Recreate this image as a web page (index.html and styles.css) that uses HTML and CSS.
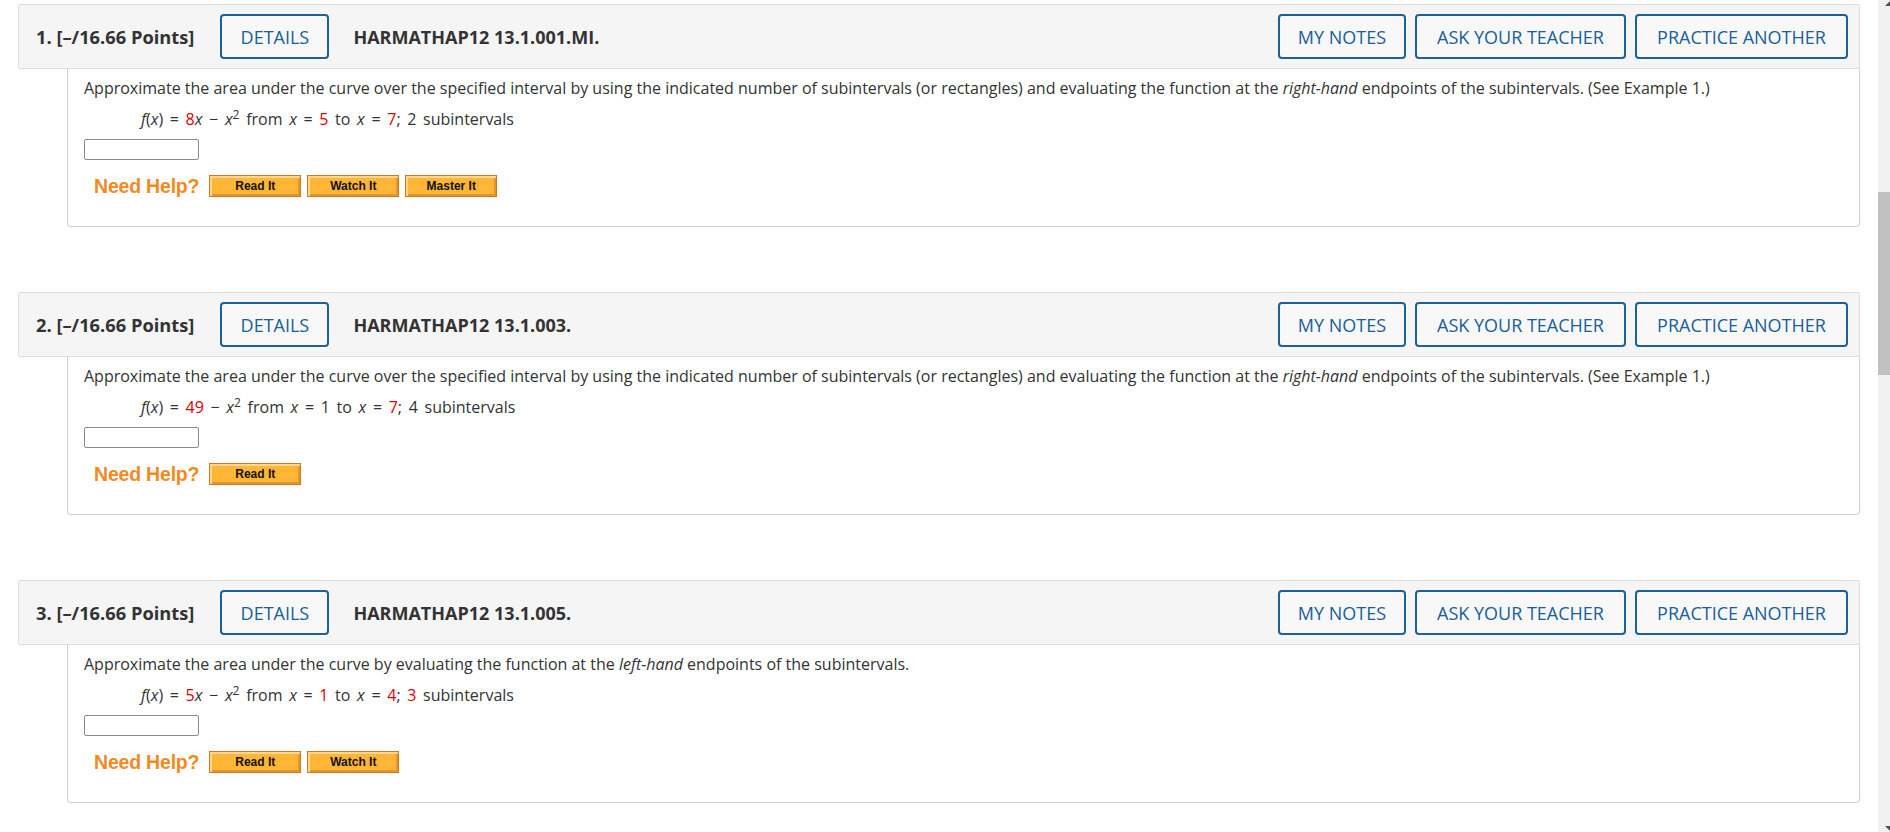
FILE: index.html
```html
<!DOCTYPE html>
<html>
<head>
<meta charset="utf-8">
<title>Questions</title>
<link rel="stylesheet" href="styles.css">
</head>
<body>
<div class="page">
  <main class="main">
    <section class="question">
      <div class="q-head">
        <span class="q-points">1. [–/16.66 Points]</span>
        <button class="q-btn q-details">DETAILS</button>
        <span class="q-code">HARMATHAP12 13.1.001.MI.</span>
        <div class="q-actions">
          <button class="q-btn">MY NOTES</button>
          <button class="q-btn">ASK YOUR TEACHER</button>
          <button class="q-btn">PRACTICE ANOTHER</button>
        </div>
      </div>
      <div class="q-body">
        <p class="q-text">Approximate the area under the curve over the specified interval by using the indicated number of subintervals (or rectangles) and evaluating the function at the <i>right-hand</i> endpoints of the subintervals. (See Example 1.)</p>
        <p class="q-formula"><i>f</i>(<i>x</i>) = <span class="red">8</span><i>x</i> − <i>x</i><sup>2</sup> from <i>x</i> = <span class="red">5</span> to <i>x</i> = <span class="red">7</span>; 2 subintervals</p>
        <input class="q-input" type="text">
        <div class="q-help">
          <span class="need-help">Need Help?</span>
          <button class="help-btn">Read It</button>
          <button class="help-btn">Watch It</button>
          <button class="help-btn">Master It</button>
        </div>
      </div>
    </section>

    <section class="question">
      <div class="q-head">
        <span class="q-points">2. [–/16.66 Points]</span>
        <button class="q-btn q-details">DETAILS</button>
        <span class="q-code">HARMATHAP12 13.1.003.</span>
        <div class="q-actions">
          <button class="q-btn">MY NOTES</button>
          <button class="q-btn">ASK YOUR TEACHER</button>
          <button class="q-btn">PRACTICE ANOTHER</button>
        </div>
      </div>
      <div class="q-body">
        <p class="q-text">Approximate the area under the curve over the specified interval by using the indicated number of subintervals (or rectangles) and evaluating the function at the <i>right-hand</i> endpoints of the subintervals. (See Example 1.)</p>
        <p class="q-formula"><i>f</i>(<i>x</i>) = <span class="red">49</span> − <i>x</i><sup>2</sup> from <i>x</i> = 1 to <i>x</i> = <span class="red">7</span>; 4 subintervals</p>
        <input class="q-input" type="text">
        <div class="q-help">
          <span class="need-help">Need Help?</span>
          <button class="help-btn">Read It</button>
        </div>
      </div>
    </section>

    <section class="question">
      <div class="q-head">
        <span class="q-points">3. [–/16.66 Points]</span>
        <button class="q-btn q-details">DETAILS</button>
        <span class="q-code">HARMATHAP12 13.1.005.</span>
        <div class="q-actions">
          <button class="q-btn">MY NOTES</button>
          <button class="q-btn">ASK YOUR TEACHER</button>
          <button class="q-btn">PRACTICE ANOTHER</button>
        </div>
      </div>
      <div class="q-body">
        <p class="q-text">Approximate the area under the curve by evaluating the function at the <i>left-hand</i> endpoints of the subintervals.</p>
        <p class="q-formula"><i>f</i>(<i>x</i>) = <span class="red">5</span><i>x</i> − <i>x</i><sup>2</sup> from <i>x</i> = <span class="red">1</span> to <i>x</i> = <span class="red">4</span>; <span class="red">3</span> subintervals</p>
        <input class="q-input" type="text">
        <div class="q-help">
          <span class="need-help">Need Help?</span>
          <button class="help-btn">Read It</button>
          <button class="help-btn">Watch It</button>
        </div>
      </div>
    </section>
  </main>
  <div class="scrollbar">
    <div class="sb-arrow sb-up"></div>
    <div class="sb-thumb"></div>
    <div class="sb-arrow sb-down"></div>
  </div>
</div>
</body>
</html>
```

FILE: styles.css
```css
* { box-sizing: border-box; }

html, body {
  margin: 0;
  padding: 0;
  height: 100%;
  overflow: hidden;
  background: #fff;
}

body {
  font-family: "Open Sans", "Liberation Sans", sans-serif;
  color: #333;
}

.page {
  display: flex;
  height: 832px;
}

.main {
  flex: 1;
  padding: 4px 18px 0 18px;
}

.question {
  margin-bottom: 65px;
}

.q-head {
  display: flex;
  align-items: center;
  height: 65px;
  background: #f5f5f5;
  border: 1px solid #dcdcdc;
  border-radius: 2px;
  padding: 0 11px 0 17px;
}

.q-points {
  font-weight: 700;
  font-size: 18.3px;
  color: #333;
  margin-right: 26px;
}

.q-code {
  font-weight: 700;
  font-size: 18px;
  color: #333;
  margin-left: 24px;
}

.q-btn {
  font-family: "Open Sans", "Liberation Sans", sans-serif;
  font-size: 18px;
  font-weight: 400;
  color: #17609a;
  background: #f8f8f8;
  border: 2px solid #1a6296;
  border-radius: 4px;
  height: 45px;
  padding: 0 12px;
  cursor: pointer;
  white-space: nowrap;
}

.q-details {
  width: 109px;
}

.q-actions {
  margin-left: auto;
  display: flex;
  gap: 9px;
}

.q-actions .q-btn:nth-child(1) { width: 128px; }
.q-actions .q-btn:nth-child(2) { width: 211px; }
.q-actions .q-btn:nth-child(3) { width: 213px; }

.q-body {
  margin-left: 49px;
  border: 1px solid #cfcfcf;
  border-top: none;
  border-radius: 0 0 4px 4px;
  padding: 8px 16px 0 16px;
  height: 158px;
}

.q-text {
  margin: 0;
  font-size: 16px;
  line-height: 22px;
  color: #333;
}

.q-formula {
  margin: 9px 0 0 57px;
  font-size: 16px;
  line-height: 22px;
  word-spacing: 2.5px;
  color: #333;
}

.q-formula sup {
  font-size: 12px;
  line-height: 0;
}

.red {
  color: #e00000;
}

.q-input {
  display: block;
  width: 115px;
  height: 21px;
  margin-top: 9px;
  border: 1px solid #8a8a8a;
  border-radius: 2px;
  background: #fff;
  padding: 0;
}

.q-help {
  display: flex;
  align-items: center;
  margin-top: 15px;
  padding-left: 10px;
  height: 22px;
}

.need-help {
  font-family: "Liberation Sans", Arial, sans-serif;
  font-weight: 700;
  font-size: 19.5px;
  color: #f28a1e;
  margin-right: 10px;
  letter-spacing: -0.2px;
}

.help-btn {
  font-family: "Liberation Sans", Arial, sans-serif;
  font-weight: 700;
  font-size: 12px;
  color: #111;
  width: 92px;
  height: 22px;
  margin-right: 6px;
  padding: 0;
  background: #ffb535;
  border: 1px solid #cc7a22;
  box-shadow: inset 2px 2px 0 #ffd88e, inset -2px -2px 0 #e8942c;
  cursor: pointer;
}

.scrollbar {
  width: 12px;
  background: #f1f1f1;
  position: relative;
  display: flex;
  flex-direction: column;
}

.sb-thumb {
  margin-top: 192px;
  height: 183px;
  background: #c1c1c1;
}

.sb-arrow {
  position: absolute;
  right: 0;
  width: 0;
  height: 0;
}

.sb-up {
  top: 1px;
  border-left: 5px solid transparent;
  border-bottom: 5px solid #505050;
}

.sb-down {
  bottom: 1px;
  border-left: 5px solid transparent;
  border-top: 5px solid #505050;
}
```
